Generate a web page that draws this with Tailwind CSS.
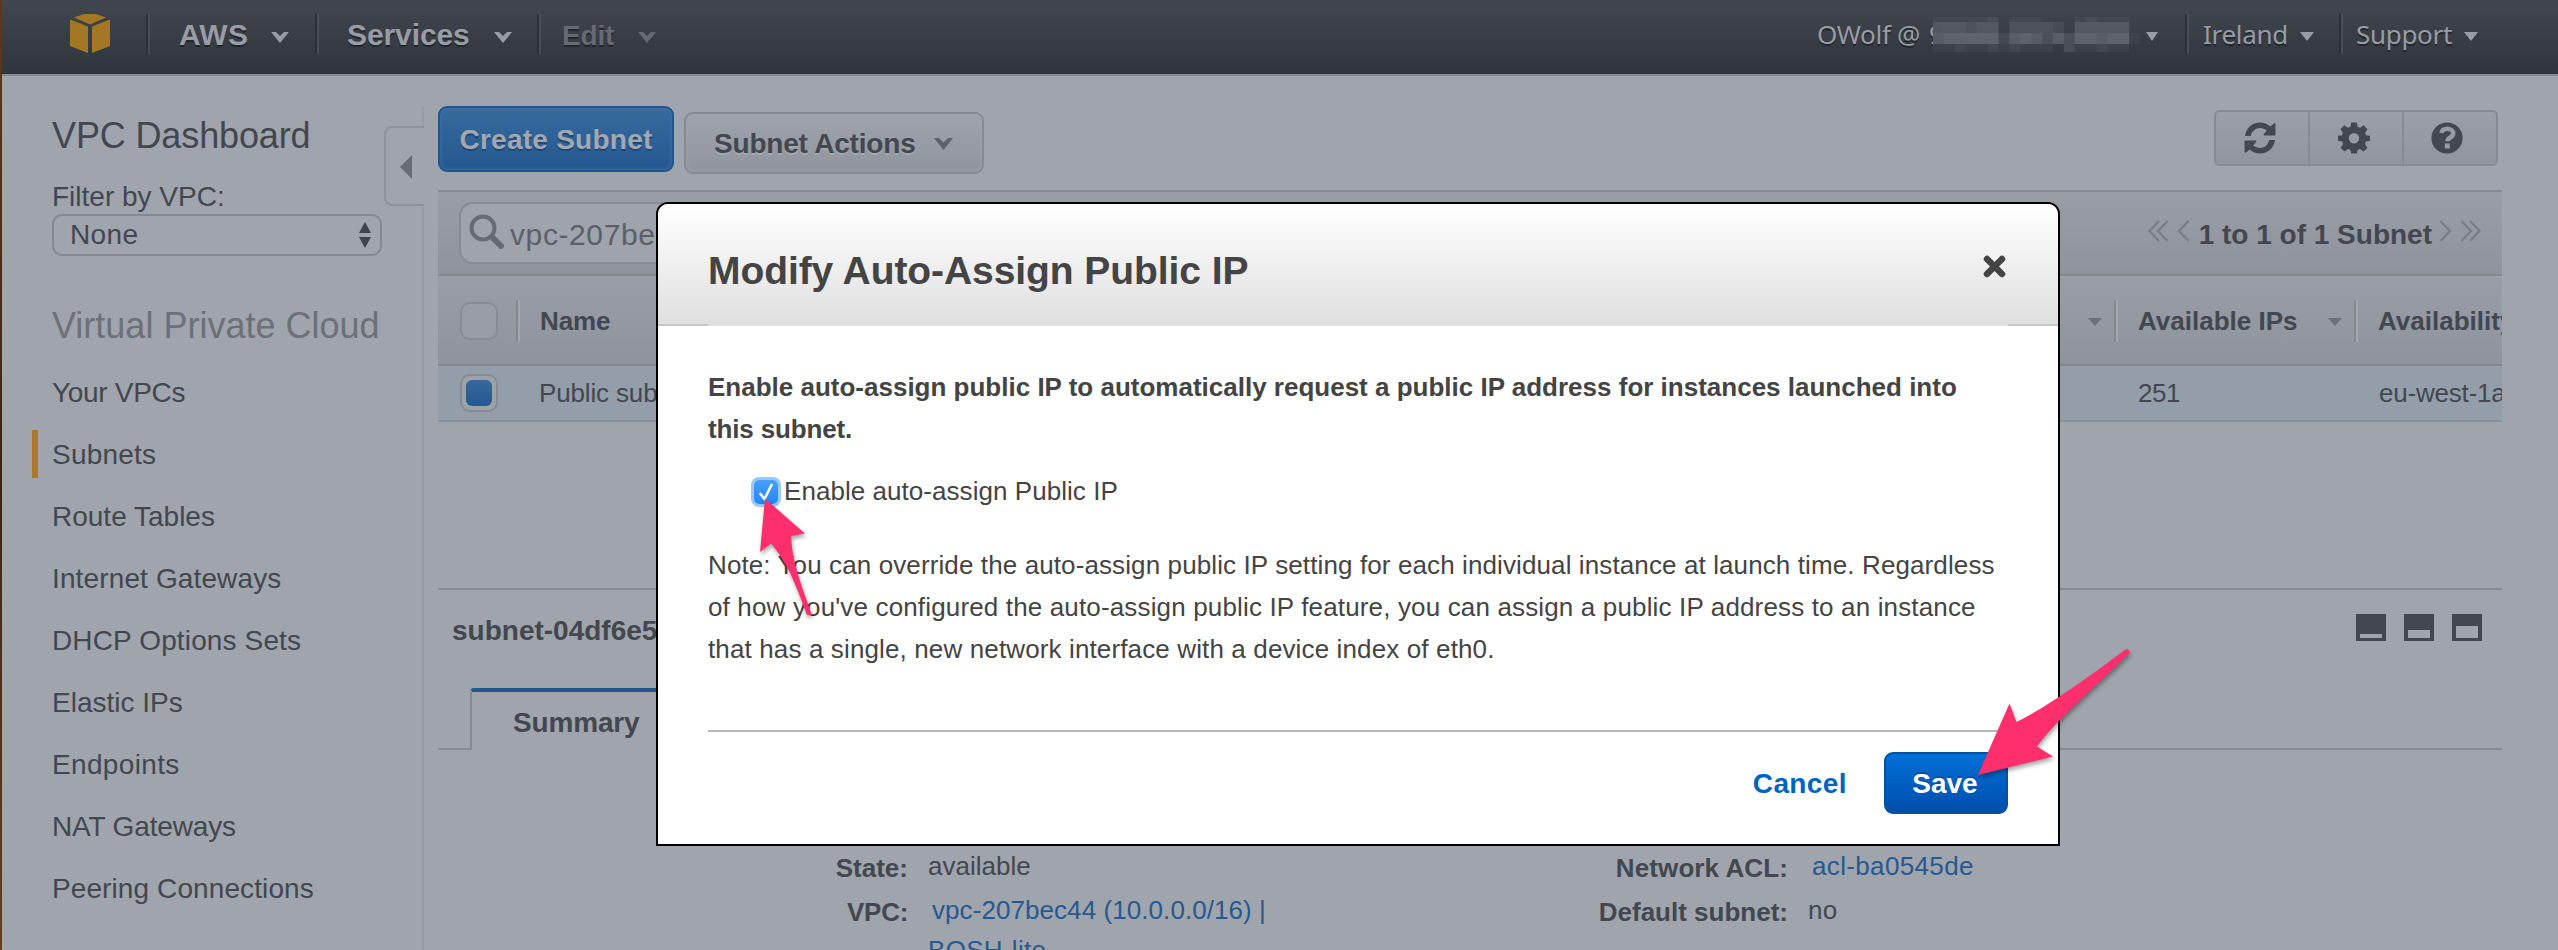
<!DOCTYPE html>
<html lang="en">
<head>
<meta charset="utf-8">
<title>VPC Dashboard</title>
<script src="https://cdn.jsdelivr.net/npm/@tailwindcss/browser@4"></script>
</head>
<body class="relative flex h-[950px] w-[2558px] overflow-hidden bg-[#a0a4ac] font-['Liberation_Sans',Arial,sans-serif] text-[26px] leading-[42px] text-[#43474f]">
<div class="w-[2px] shrink-0 bg-linear-to-b from-[#5a3a1c] via-[#3a2410] to-[#5f4021]"></div>
<div class="flex h-full w-[2556px] shrink-0 flex-col">

  <!-- Top navigation -->
  <header class="flex h-[76px] shrink-0 border-b-2 border-[#868b95] bg-linear-to-b from-[#42474f] to-[#30343d] pt-[14px] text-[30px] leading-10 text-[#989ca4] text-shadow-[0_2px_0_#22262d]">
    <svg class="ml-[68px] h-[39px] w-10" viewBox="0 0 40 39" fill="#a47725"><path d="M4 3.500 14 0h12l10 3.500L20 10.500z"/><path d="M0 5.500 18 12.500V39L0 32z"/><path d="M40 5.500 22 12.500V39l18-7z"/></svg>
    <i class="ml-9 h-10 w-1 border-x-2 border-l-[#2c3038] border-r-[#484d56]"></i>
    <div class="ml-[29px] flex w-[137px] items-start gap-[23px] font-bold"><span class="mt-px tracking-[0.3px]">AWS</span><svg class="mt-[17px] h-3 w-[18px]" viewBox="0 0 18 12" fill="currentColor"><path d="M0 1h5l4 4 4-4h5L9 12z"/></svg></div>
    <i class="-ml-[1px] h-10 w-1 border-x-2 border-l-[#2c3038] border-r-[#484d56]"></i>
    <div class="ml-[28px] flex w-[191px] items-start gap-[24px] font-bold"><span class="mt-px tracking-[-0.1px]">Services</span><svg class="mt-[17px] h-3 w-[18px]" viewBox="0 0 18 12" fill="currentColor"><path d="M0 1h5l4 4 4-4h5L9 12z"/></svg></div>
    <i class="-ml-[1px] h-10 w-1 border-x-2 border-l-[#2c3038] border-r-[#484d56]"></i>
    <div class="ml-[21px] flex items-start gap-[24px] text-[28px] font-bold text-[#656a73]"><span class="mt-[2px] tracking-[-0.2px]">Edit</span><svg class="mt-[17px] h-3 w-[18px]" viewBox="0 0 18 12" fill="currentColor"><path d="M0 1h5l4 4 4-4h5L9 12z"/></svg></div>
    <div class="ml-auto mr-[80px] flex font-['Noto_Sans',sans-serif] text-[26px] tracking-[-0.3px]">
      <div class="flex w-[368px] items-start"><span class="w-[113px] whitespace-pre">OWolf @ </span><span class="-ml-px w-[4px] overflow-hidden">9</span><svg id="mosaic" class="mt-[2px] h-[38px] w-[211px]" viewBox="0 0 211 38"></svg><svg class="ml-[2px] mt-[18px] h-[9px] w-3" viewBox="0 0 12 9" fill="currentColor"><path d="M0 0h12L6 9z"/></svg></div>
      <i class="h-10 w-1 border-x-2 border-l-[#2c3038] border-r-[#484d56]"></i>
      <div class="ml-[14px] flex w-[136px] items-start justify-between pr-[25px]"><span>Ireland</span><svg class="mt-[18px] h-[9px] w-[14px]" viewBox="0 0 14 9" fill="currentColor"><path d="M0 0h14L7 9z"/></svg></div>
      <i class="h-10 w-1 border-x-2 border-l-[#2c3038] border-r-[#484d56]"></i>
      <div class="ml-[13px] flex w-[122px] items-start justify-between"><span>Support</span><svg class="mt-[18px] h-[9px] w-[14px]" viewBox="0 0 14 9" fill="currentColor"><path d="M0 0h14L7 9z"/></svg></div>
    </div>
  </header>

  <div class="flex min-h-0 flex-1">
    <!-- Sidebar -->
    <aside class="relative w-[422px] shrink-0 pl-[50px] pt-[39px] text-[28px] leading-[42px]">
      <i class="absolute right-0 top-[30px] h-[844px] w-[2px] bg-[#979ba4]"></i>
      <div class="absolute right-0 top-[50px] flex h-[80px] w-[40px] items-center rounded-l-[8px] border-2 border-r-0 border-[#8e939c] bg-[#a0a4ac] pl-[14px]"><svg class="mt-[2px] h-6 w-3" viewBox="0 0 12 24" fill="#666b74"><path d="M12 0v24L0 12z"/></svg></div>
      <h2 class="text-[36px] tracking-[-0.13px]">VPC Dashboard</h2>
      <p class="mt-[19px]">Filter by VPC:</p>
      <div class="mt-[-4px] flex h-[42px] w-[330px] items-center justify-between rounded-[10px] border-2 border-[#838892] pl-[16px] pr-[9px] leading-[36px] tracking-[0.4px]">None
        <svg class="h-[26px] w-3" viewBox="0 0 12 26" fill="#3f434b"><path d="M0 11h12L6 0zM0 15h12L6 26z"/></svg></div>
      <h3 class="mt-[49px] text-[36px] text-[#6b7079]">Virtual Private Cloud</h3>
      <ul class="mt-[15px] leading-[62px] whitespace-nowrap">
        <li class="h-[62px] tracking-[-0.3px]">Your VPCs</li>
        <li class="relative h-[62px] tracking-[0.2px]"><i class="absolute -left-5 top-[6px] h-12 w-[6px] bg-[#a87a2d]"></i>Subnets</li>
        <li class="h-[62px]">Route Tables</li>
        <li class="h-[62px] tracking-[0.13px]">Internet Gateways</li>
        <li class="h-[62px] tracking-[0.13px]">DHCP Options Sets</li>
        <li class="h-[62px]">Elastic IPs</li>
        <li class="h-[62px] tracking-[0.35px]">Endpoints</li>
        <li class="h-[62px] tracking-[-0.15px]">NAT Gateways</li>
        <li class="h-[62px] tracking-[0.1px]">Peering Connections</li>
      </ul>
    </aside>

    <!-- Content -->
    <main class="ml-[14px] mr-14 flex w-[2064px] shrink-0 flex-col">
      <div class="flex h-[114px] shrink-0 items-start pt-[30px] text-[28px] font-bold">
        <div class="flex h-[66px] w-[236px] items-center justify-center rounded-[9px] border-2 border-[#1f5691] bg-linear-to-b from-[#376a9f] to-[#25588e] pt-[2px] tracking-[0.25px] text-[#a3a8b0] inset-shadow-[0_0_4px_#4477a8] text-shadow-[0_2px_0_#1d4878]">Create Subnet</div>
        <div class="ml-[10px] mt-[6px] flex h-[62px] w-[300px] items-center rounded-[9px] border-2 border-[#858a94] bg-linear-to-b from-[#9fa3ab] to-[#90949d] pl-[28px] pt-[2px] text-shadow-[0_2px_0_#a3a7af] tracking-[-0.2px] inset-shadow-[0_0_4px_#a0a4ac]">Subnet Actions
          <svg class="ml-[18px] h-3 w-[19px]" viewBox="0 0 19 12" fill="#5d626b"><path d="M0 0h5l4.500 4.500L14 0h5L9.500 12z"/></svg></div>
        <div class="ml-auto mr-1 mt-1 flex h-14 w-[284px] rounded-[6px] border-2 border-[#858a94] bg-linear-to-b from-[#9b9fa8] to-[#91959e] text-[#43474f]">
          <div class="flex w-[94px] items-center border-r-2 border-[#858a94] pl-[28px]"><svg class="h-8 w-8" viewBox="0 0 32 32" fill="currentColor"><path d="M1 14C2 6 8 .5 16 .5c4 0 7.500 1.500 10.300 4L30 1.500c.8-.6 1.500-.2 1.500.8V13.500H20.500c-1 0-1.300-.8-.7-1.500l3-3.200C21 7 18.700 6 16 6c-4.500 0-8 3-9.300 8zM31 18c-1 8-7 13.500-15 13.500-4 0-7.500-1.500-10.300-4L2 30.500c-.8.6-1.500.2-1.500-.8V18.500H11.500c1 0 1.300.8.7 1.500l-3 3.200C11 25 13.300 26 16 26c4.500 0 8-3 9.300-8z"/></svg></div>
          <div class="flex w-[94px] items-center border-r-2 border-[#858a94] pl-[28px]"><svg class="h-8 w-8" viewBox="0 0 32 32" fill="currentColor" fill-rule="evenodd"><path d="M13.200.5h5.600l.8 4.300 2.500 1L25.700 3.300l3.800 3.900-2.400 3.500 1 2.500 3.900.6v5l-4 .8-1.100 2.400 2.500 3.700-3.800 3.900-3.600-2.500-2.400 1-.8 3.400h-5.600l-.8-3.400-2.400-1-3.600 2.500-3.800-3.900 2.500-3.700L4 19.600l-4-.8v-5l3.900-.6 1-2.500L2.500 7.200l3.800-3.900 3.600 2.500 2.500-1zM16 11a5.200 5.200 0 1 0 0 10.400A5.200 5.200 0 0 0 16 11z"/></svg></div>
          <div class="flex w-[92px] items-center pl-[27px]"><svg class="h-8 w-8" viewBox="0 0 32 32"><circle cx="16" cy="16" r="15.600" fill="currentColor"/><path d="M10.500 11c.5-3 3-4.300 5.700-4.300 3.500 0 6 1.700 6 4.700 0 4.500-5.700 3.700-5.700 7.800" fill="none" stroke="#969aa3" stroke-width="4.500"/><path d="M13.800 21.500h5v5h-5z" fill="#969aa3"/></svg></div>
        </div>
      </div>

      <!-- Search and pager -->
      <div class="flex h-[86px] shrink-0 items-center border-y-2 border-t-[#858a94] border-b-[#83888f] bg-linear-to-b from-[#999da6] to-[#8f939c] pl-[21px] pr-[21px]">
        <div class="flex h-[62px] w-[480px] items-center rounded-[14px] border-2 border-[#868b94] bg-[#9fa3ab] pl-[8px] text-[30px] tracking-[0.6px] text-[#5b6068]"><svg class="mb-1 mr-[5px] h-[36px] w-[36px] shrink-0" viewBox="0 0 36 36" fill="none" stroke="#656a73"><circle cx="14" cy="15" r="11.500" stroke-width="4"/><path d="M23 24l9 9" stroke-width="6" stroke-linecap="round"/></svg><span class="mt-[3px]">vpc-207bec44</span></div>
        <div class="ml-auto flex items-center text-[28px] font-bold">
          <svg class="mb-1 mr-[9px] h-[22px] w-[42px]" viewBox="0 0 42 22" fill="none" stroke="#777c85" stroke-width="2.200"><path d="M11 1 1.500 11 11 21M19.500 1 10 11l9.500 10M40.500 1 31 11l9.500 10"/></svg>
          <span class="mt-[3px]">1 to 1 of 1 Subnet</span>
          <svg class="mb-1 ml-[7px] h-[22px] w-[42px]" viewBox="0 0 42 22" fill="none" stroke="#777c85" stroke-width="2.200"><path d="M1.500 1 11 11 1.500 21M22.500 1 32 11l-9.500 10M31 1l9.500 10L31 21"/></svg>
        </div>
      </div>
      <!-- Table -->
      <div class="flex h-[90px] shrink-0 items-center overflow-hidden border-y-2 border-t-[#9ca0a8] border-b-[#83888f] bg-linear-to-b from-[#999da6] to-[#8f939c] font-bold whitespace-nowrap">
        <i class="ml-[22px] h-[38px] w-[38px] shrink-0 rounded-[10px] border-2 border-[#868b94] bg-[#999da5]"></i>
        <i class="ml-[18px] h-[42px] w-1 shrink-0 border-x-2 border-l-[#83888f] border-r-[#a3a7af]"></i>
        <span class="ml-5 w-[1548px] shrink-0 tracking-[-0.1px]">Name</span>
        <svg class="mt-[1px] h-[8px] w-[14px] shrink-0" viewBox="0 0 14 8" fill="#6b7079"><path d="M0 0h14L7 8z"/></svg>
        <i class="ml-[12px] h-[42px] w-1 shrink-0 border-x-2 border-l-[#83888f] border-r-[#a3a7af]"></i>
        <span class="ml-5 w-[190px] shrink-0">Available IPs</span>
        <svg class="mt-[1px] h-[8px] w-[14px] shrink-0" viewBox="0 0 14 8" fill="#6b7079"><path d="M0 0h14L7 8z"/></svg>
        <i class="ml-[12px] h-[42px] w-1 shrink-0 border-x-2 border-l-[#83888f] border-r-[#a3a7af]"></i>
        <span class="ml-5 shrink-0">Availability</span>
      </div>
      <div class="flex h-14 shrink-0 items-center overflow-hidden border-b-2 border-[#8b9097] bg-[#939eaa] whitespace-nowrap">
        <div class="ml-[22px] flex h-[38px] w-[38px] shrink-0 items-center justify-center rounded-[10px] border-2 border-[#868b90] bg-[#9da2a8]"><i class="h-[26px] w-[26px] rounded-[6px] bg-linear-to-b from-[#366a9f] to-[#25588e]"></i></div>
        <span class="ml-[41px] w-[1599px] shrink-0 tracking-[-0.15px]">Public subnet</span>
        <span class="w-[241px] shrink-0 tracking-[-0.5px]">251</span>
        <span class="shrink-0 tracking-[-0.2px]">eu-west-1a</span>
      </div>
      <div class="h-[166px] shrink-0"></div>

      <!-- Details pane -->
      <div class="flex h-[100px] shrink-0 items-start justify-between border-t-2 border-[#858a94] pl-[14px] pr-[20px] pt-[20px] text-[28px] font-bold">
        <span>subnet-04df6e5b</span>
        <div class="mt-[4px] flex gap-[18px]">
          <div class="h-[27px] w-[30px] bg-[#43474f] px-[4px] pt-[20px]"><div class="h-[4px] bg-[#a0a4ac]"></div></div>
          <div class="h-[27px] w-[30px] bg-[#43474f] px-[4px] pt-[16px]"><div class="h-[8px] bg-[#a0a4ac]"></div></div>
          <div class="h-[27px] w-[30px] bg-[#43474f] px-[4px] pt-[12px]"><div class="h-[12px] bg-[#a0a4ac]"></div></div>
        </div>
      </div>
      <div class="flex h-[62px] shrink-0">
        <div class="w-8 border-b-2 border-[#858a94]"></div>
        <div class="w-[220px] rounded-tl-[4px] border-l-2 border-t-4 border-l-[#858a94] border-t-[#22568f] pl-[41px] pt-[6px] text-[28px] leading-[50px] font-bold tracking-[-0.17px]">Summary</div>
        <div class="flex-1 border-b-2 border-[#858a94]"></div>
      </div>
      <div class="grid grid-cols-[470px_310px_570px_1fr] pt-[95px] leading-[44px] whitespace-nowrap">
        <b class="mt-[1px] text-right">State:</b><span class="-mt-px pl-[20px]">available</span>
        <b class="mt-[1px] text-right tracking-[0.1px]">Network ACL:</b><span class="-mt-px pl-[24px] tracking-[0.35px] text-[#25598f]">acl-ba0545de</span>
        <b class="text-right tracking-[-0.3px]">VPC:</b><span class="-mt-[2px] pl-[24px] tracking-[0.07px] text-[#25598f]">vpc-207bec44 (10.0.0.0/16) |</span>
        <b class="text-right">Default subnet:</b><span class="-mt-[2px] pl-[20px] tracking-[0.3px]">no</span>
        <span></span><span class="-mt-[6px] pl-[20px] tracking-[0.3px] text-[#25598f]">BOSH-lite</span>
      </div>
    </main>
  </div>
</div>

<!-- Dialog -->
<section class="absolute left-[656px] top-[202px] flex h-[644px] w-[1404px] flex-col rounded-t-[12px] border-2 border-black bg-white text-[#444]">
  <div class="relative flex h-[122px] shrink-0 items-start justify-between rounded-t-[10px] bg-linear-to-b from-white to-[#dfdfdf] pl-[50px] pr-[52px]">
    <h1 class="pt-[37px] text-[39px] leading-[60px] font-bold tracking-[-0.07px]">Modify Auto-Assign Public IP</h1>
    <svg class="mt-[51px] h-[23px] w-[23px]" viewBox="0 0 23 23" stroke="#444" stroke-width="6.500" stroke-linecap="round"><path d="M4 4l15 15M19 4 4 19"/></svg>
    <i class="absolute bottom-0 left-0 h-[2px] w-[50px] bg-[#c8c8c8]"></i>
    <i class="absolute bottom-0 right-0 h-[2px] w-[50px] bg-[#c8c8c8]"></i>
  </div>
  <div class="flex flex-1 flex-col px-[50px] pt-[40px] whitespace-nowrap">
    <p class="font-bold">Enable auto-assign public IP to automatically request a public IP address for instances launched into<br><span class="tracking-[-0.15px]">this subnet.</span></p>
    <label class="mt-[20px] flex items-center pl-[46px]"><span class="mr-[6px] mt-[2px] flex h-6 w-6 items-center justify-center rounded-[5px] bg-linear-to-b from-[#4a9ff8] to-[#1f87fb] ring-3 ring-[#9cc8f8]"><svg class="h-5 w-4" viewBox="0 0 16 20" fill="none" stroke="#fff" stroke-width="2.600" stroke-linecap="round" stroke-linejoin="round"><path d="M2.500 12l4 5L13.500 3"/></svg></span><span class="tracking-[0.05px]">Enable auto-assign Public IP</span></label>
    <p class="mt-[32px] tracking-[0.11px]">Note: You can override the auto-assign public IP setting for each individual instance at launch time. Regardless<br><span class="tracking-[0.15px]">of how you've configured the auto-assign public IP feature, you can assign a public IP address to an instance</span><br><span class="tracking-[0.13px]">that has a single, new network interface with a device index of eth0.</span></p>
    <div class="mt-[60px] flex items-start justify-end border-t-2 border-[#b8b8b8] pt-[20px] text-[28px] font-bold">
      <span class="mr-[37px] leading-[64px] tracking-[0.4px] text-[#0064bf]">Cancel</span>
      <div class="h-[62px] w-[124px] rounded-[9px] border-2 border-[#0451a4] bg-linear-to-b from-[#0070d8] to-[#004eab] pr-[2px] text-center leading-[60px] text-white text-shadow-[0_-2px_0_#0451a4]">Save</div>
    </div>
  </div>
</section>

<!-- Pointer arrows -->
<svg class="absolute inset-0 h-[950px] w-[2558px] drop-shadow-[1px_3px_2px_rgba(0,0,0,0.35)]" viewBox="0 0 2558 950" fill="#ff2e6c">
  <path d="M765 498.500 805 533.500 791 536C792 560 800 582 812 615H807C795 582 787 562 771 543.500L760 552z"/>
  <path d="M1978 775 2009.500 703.500 2016.500 722C2045 708 2085 680 2125.500 649.500Q2129 648 2130 652.500C2090 692 2060 716 2037 746.500L2053 756.500z"/>
</svg>
<script>
  // Pixelated account number: four rows of opacity levels, one digit per column
  const rows = [[0, 5, '1111120111000121110'], [5, 11, '4443440333320444440'], [16, 11, '5666662565353665661'], [27, 8, '1121121211103112110']];
  let cells = '';
  for (const [y, h, levels] of rows)
    [...levels].forEach((v, i) => cells += `<rect x="${i * 10.9}" y="${y + 1}" width="11" height="${h}" fill="#9aa0a8" fill-opacity="${v * 0.065}"/>`);
  document.getElementById('mosaic').innerHTML = cells;
</script>
</body>
</html>
